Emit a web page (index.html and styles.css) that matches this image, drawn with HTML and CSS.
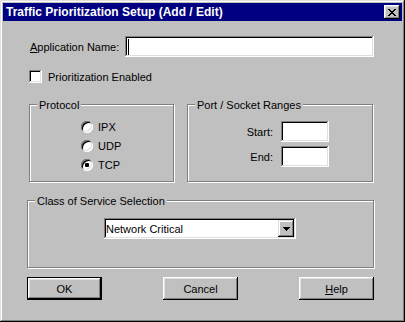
FILE: index.html
```html
<!DOCTYPE html>
<html lang="en">
  <head>
    <meta charset="UTF-8" />
    <title>Traffic Prioritization Setup</title>
    <link rel="stylesheet" href="styles.css">
  </head>
  <body>
    <div class="dialog">
      <!-- title bar -->
      <div class="title-bar">
        <span class="title-text">Traffic Prioritization Setup (Add / Edit)</span>
        <button class="close-btn" aria-label="Close">
          <svg width="8" height="7" viewBox="0 0 8 7" shape-rendering="crispEdges">
            <path d="M0 0h2v1h1v1h2V1h1V0h2v1H7v1H6v1H5v1h1v1h1v1h1v1H6V6H5V5H3v1H2v1H0V6h1V5h1V4h1V3H2V2H1V1H0z" fill="#000" />
          </svg>
        </button>
      </div>

      <div class="dialog-body">
        <!-- application name -->
        <div class="field-row">
          <label class="field-label"><u>A</u>pplication Name:</label>
          <div class="text-box app-name"><span class="caret"></span></div>
        </div>

        <div class="check-row">
          <span class="checkbox"></span>
          <span>Prioritization Enabled</span>
        </div>

        <!-- protocol / ports -->
        <div class="group-row">
          <div class="group protocol">
            <div class="group-label">Protocol</div>
            <div class="radio-list">
              <div class="radio-row"><span class="radio"></span><span>IPX</span></div>
              <div class="radio-row"><span class="radio"></span><span>UDP</span></div>
              <div class="radio-row"><span class="radio"><span class="dot"></span></span><span>TCP</span></div>
            </div>
          </div>

          <div class="group ports">
            <div class="group-label">Port / Socket Ranges</div>
            <div class="port-list">
              <div class="port-row">
                <span class="port-label">Start:</span>
                <div class="text-box port-box"></div>
              </div>
              <div class="port-row">
                <span class="port-label">End:</span>
                <div class="text-box port-box"></div>
              </div>
            </div>
          </div>
        </div>

        <!-- class of service -->
        <div class="group service">
          <div class="group-label">Class of Service Selection</div>
          <div class="text-box combo">
            <span class="combo-text">Network Critical</span>
            <span class="combo-btn">
              <svg width="7" height="4" viewBox="0 0 7 4" shape-rendering="crispEdges">
                <path d="M0 0h7v1H6v1H5v1H4v1H3V3H2V2H1V1H0z" fill="#000" />
              </svg>
            </span>
          </div>
        </div>

        <div class="button-row">
          <button class="btn default">OK</button>
          <button class="btn">Cancel</button>
          <button class="btn"><u>H</u>elp</button>
        </div>
      </div>
    </div>
  </body>
</html>
```

FILE: styles.css
```css
* {
  box-sizing: border-box;
}

html,
body {
  margin: 0;
  padding: 0;
  background-color: #c0c0c0;
}

body {
  font-family: "Liberation Sans", Arial, sans-serif;
  font-size: 11px;
  color: #000;
}

/* window frame */
.dialog {
  width: 405px;
  height: 322px;
  padding: 3px;
  background-color: #c0c0c0;
  box-shadow: inset -1px -1px #000, inset 1px 1px #dfdfdf,
    inset -2px -2px #808080, inset 2px 2px #fff;
}

.title-bar {
  display: flex;
  align-items: center;
  justify-content: space-between;
  height: 18px;
  padding: 0 2px 0 3px;
  background-color: #000080;
  color: #fff;
  font-size: 12px;
  font-weight: 700;
}

.close-btn {
  display: flex;
  align-items: center;
  justify-content: center;
  width: 16px;
  height: 14px;
  padding: 0;
  border: 0;
  background-color: #c0c0c0;
  box-shadow: inset -1px -1px #000, inset 1px 1px #fff,
    inset -2px -2px #808080, inset 2px 2px #dfdfdf;
}

.dialog-body {
  padding: 15px 28px 0 24px;
}

/* sunken fields */
.text-box {
  background-color: #fff;
  box-shadow: inset -1px -1px #fff, inset 1px 1px #808080,
    inset -2px -2px #dfdfdf, inset 2px 2px #000;
}

.field-row {
  display: flex;
  align-items: center;
  height: 21px;
}

.field-label {
  width: 98px;
  padding-left: 3px;
}

.app-name {
  flex: 1;
  height: 21px;
  display: flex;
  padding: 3px 0 2px 3px;
}

.caret {
  width: 1px;
  background-color: #000;
}

.check-row {
  display: flex;
  align-items: center;
  gap: 6px;
  height: 13px;
  margin-top: 13px;
  padding-left: 2px;
}

.checkbox {
  width: 13px;
  height: 13px;
  background-color: #fff;
  box-shadow: inset -1px -1px #fff, inset 1px 1px #808080,
    inset -2px -2px #dfdfdf, inset 2px 2px #000;
}

/* etched group boxes */
.group-row {
  display: flex;
  margin-top: 21px;
}

.group {
  border: 1px solid #808080;
  box-shadow: inset 1px 1px #fff, 1px 1px #fff;
}

.group-label {
  width: fit-content;
  margin: -7px 0 0 7px;
  padding: 0 2px;
  line-height: 14px;
  background-color: #c0c0c0;
}

.protocol {
  width: 145px;
  margin-left: 2px;
  padding-bottom: 10px;
}

.radio-list {
  display: flex;
  flex-direction: column;
  gap: 7px;
  margin: 9px 0 0 51px;
}

.radio-row {
  display: flex;
  align-items: center;
  gap: 5px;
  height: 12px;
  line-height: 12px;
}

.radio {
  display: flex;
  align-items: center;
  justify-content: center;
  width: 12px;
  height: 12px;
  border-radius: 50%;
  background-color: #fff;
  box-shadow: inset -1px -1px #fff, inset 1px 1px #808080,
    inset -2px -2px #dfdfdf, inset 2px 2px #000;
}

.dot {
  width: 4px;
  height: 4px;
  border-radius: 1px;
  background-color: #000;
}

.ports {
  width: 186px;
  margin-left: 13px;
}

.port-list {
  display: flex;
  flex-direction: column;
  gap: 4px;
  margin-top: 9px;
}

.port-row {
  display: flex;
  align-items: center;
  gap: 8px;
}

.port-label {
  width: 85px;
  text-align: right;
}

.port-box {
  width: 48px;
  height: 21px;
}

.service {
  margin-top: 18px;
  padding-bottom: 28px;
}

.combo {
  display: flex;
  align-items: center;
  width: 192px;
  height: 21px;
  margin: 10px 0 0 76px;
  padding: 2px;
}

.combo-text {
  flex: 1;
}

.combo-btn {
  display: flex;
  align-items: center;
  justify-content: center;
  width: 16px;
  height: 17px;
  background-color: #c0c0c0;
  box-shadow: inset -1px -1px #000, inset 1px 1px #dfdfdf,
    inset -2px -2px #808080, inset 2px 2px #fff;
}

/* push buttons */
.button-row {
  display: flex;
  justify-content: space-between;
  margin-top: 9px;
}

.btn {
  width: 75px;
  height: 23px;
  padding: 0;
  border: 0;
  font: inherit;
  color: #000;
  background-color: #c0c0c0;
  box-shadow: inset -1px -1px #000, inset 1px 1px #fff,
    inset -2px -2px #808080, inset 2px 2px #dfdfdf;
}

.btn.default {
  border: 1px solid #000;
}
```
